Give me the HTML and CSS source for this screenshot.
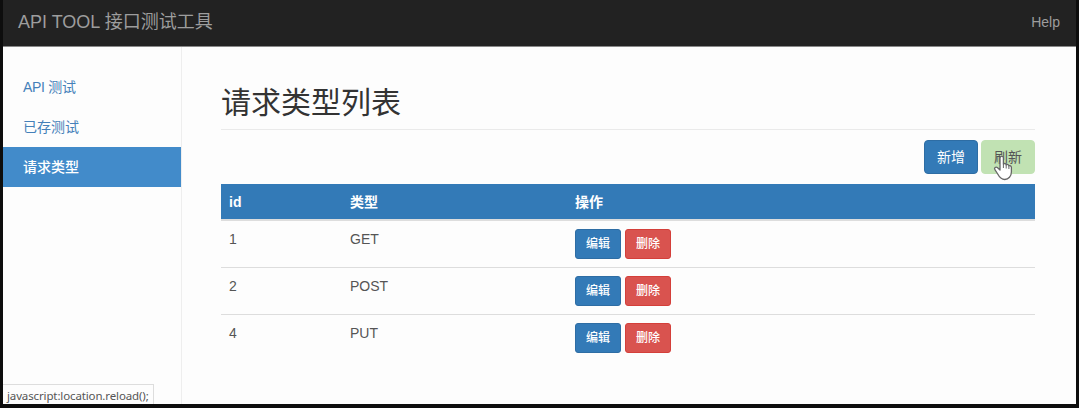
FILE: index.html
```html
<!DOCTYPE html>
<html lang="zh-CN">
<head>
<meta charset="utf-8">
<title>API TOOL 接口测试工具</title>
<link rel="stylesheet" href="styles.css">
</head>
<body>
<div class="window">
  <header class="navbar">
    <a class="brand">API TOOL 接口测试工具</a>
    <a class="help">Help</a>
  </header>
  <div class="body">
    <nav class="sidebar">
      <a class="nav-item api">API 测试</a>
      <a class="nav-item">已存测试</a>
      <a class="nav-item active">请求类型</a>
    </nav>
    <main class="main">
      <h1 class="title">请求类型列表</h1>
      <div class="toolbar">
        <button class="btn primary">新增</button>
        <button class="btn refresh">刷新
          <svg class="cursor" width="20" height="26" viewBox="0 0 20 26"><path d="M7 15V3.2C7 .5 10.400.5 10.400 3.200V9C11.500 8 13 8.600 13.200 9.800C14.300 9 15.700 9.600 15.900 10.800C17 10.200 18.400 11 18.400 12.500V17C18.400 21 15.500 24.500 11.800 24.500C8.500 24.500 6 21.500 4.400 18.500L1.900 14.600C.8 12.900 2.800 11.500 4.300 12.600Z" fill="#fff" stroke="#666" stroke-width="1.300" stroke-linejoin="round"/><path d="M10.400 9V13M13.200 10V13.500M15.900 11V14" fill="none" stroke="#666"/></svg>
        </button>
      </div>
      <table class="table">
        <thead><tr><th class="col-id">id</th><th class="col-type">类型</th><th>操作</th></tr></thead>
        <tbody>
          <tr><td>1</td><td>GET</td><td><div class="actions"><button class="btn small primary">编辑</button><button class="btn small danger">删除</button></div></td></tr>
          <tr><td>2</td><td>POST</td><td><div class="actions"><button class="btn small primary">编辑</button><button class="btn small danger">删除</button></div></td></tr>
          <tr><td>4</td><td>PUT</td><td><div class="actions"><button class="btn small primary">编辑</button><button class="btn small danger">删除</button></div></td></tr>
        </tbody>
      </table>
    </main>
  </div>
  <div class="status">javascript:location.reload();</div>
</div>
</body>
</html>
```
FILE: styles.css
```css
* { box-sizing: border-box; }
body {
  margin: 0;
  overflow: hidden;
  font: 14px/20px "Liberation Sans", "Noto Sans CJK SC", sans-serif;
  color: #555;
}
.window {
  position: relative;
  display: flex;
  flex-direction: column;
  width: 1079px;
  height: 408px;
  background: #fdfdfd;
  border: solid #0d0d0d;
  border-width: 0 3px 4px;
}
.navbar {
  display: flex;
  flex: none;
  align-items: center;
  justify-content: space-between;
  height: 47px;
  padding: 0 16px 3px 15px;
  background: #222;
  border-bottom: 1px solid #888;
  color: #9d9d9d;
}
.brand { font-size: 18px; }
.body { display: flex; flex: 1; min-height: 0; }
.sidebar {
  flex: none;
  width: 179px;
  padding-top: 20px;
  border-right: 1px solid #eee;
}
.nav-item {
  display: block;
  height: 40px;
  padding: 10px 20px;
  color: #4480b9;
}
.api { letter-spacing: -0.3px; }
.nav-item.active { background: #428bca; color: #fff; font-weight: 500; }
.main { flex: 1; padding: 37px 41px 0 39px; }
.title {
  height: 46px;
  margin: 0;
  border-bottom: 1px solid #eaeaea;
  color: #333;
  font-size: 30px;
  line-height: 38px;
  font-weight: 400;
}
.toolbar {
  display: flex;
  justify-content: flex-end;
  gap: 3px;
  padding: 10px 0;
}
.btn {
  position: relative;
  width: 54px;
  height: 34px;
  padding: 0;
  border: 1px solid;
  border-radius: 4px;
  color: #fff;
  font: inherit;
}
.primary { background: #337ab7; border-color: #2e6da4; }
.refresh { background: #c1e2b3; border-color: #c1e2b3; color: #555; }
.danger { background: #d9534f; border-color: #d43f3a; }
.small { width: 46px; height: 30px; border-radius: 3px; font-size: 12px; font-weight: 500; }
.cursor { position: absolute; left: 11px; top: 14px; }
.table {
  width: 100%;
  border-collapse: separate;
  border-spacing: 0;
  table-layout: fixed;
}
.table th {
  height: 37px;
  padding: 0 8px;
  background: #337ab7;
  background-clip: padding-box;
  border-bottom: 2px solid #ddd;
  color: #fff;
  text-align: left;
}
.col-id { width: 121px; }
.col-type { width: 225px; }
.table td { height: 46px; padding: 8px; vertical-align: top; }
.table tr + tr td { height: 47px; border-top: 1px solid #ddd; }
.actions { display: flex; gap: 4px; }
.status {
  position: absolute;
  left: 0;
  bottom: 0;
  width: 151px;
  height: 20px;
  padding-left: 4px;
  background: #fdfdfd;
  border: solid #ddd;
  border-width: 1px 1px 0 0;
  font: 11.500px/21px "Noto Sans", sans-serif;
  letter-spacing: -0.13px;
  color: #555;
  white-space: nowrap;
}
```
